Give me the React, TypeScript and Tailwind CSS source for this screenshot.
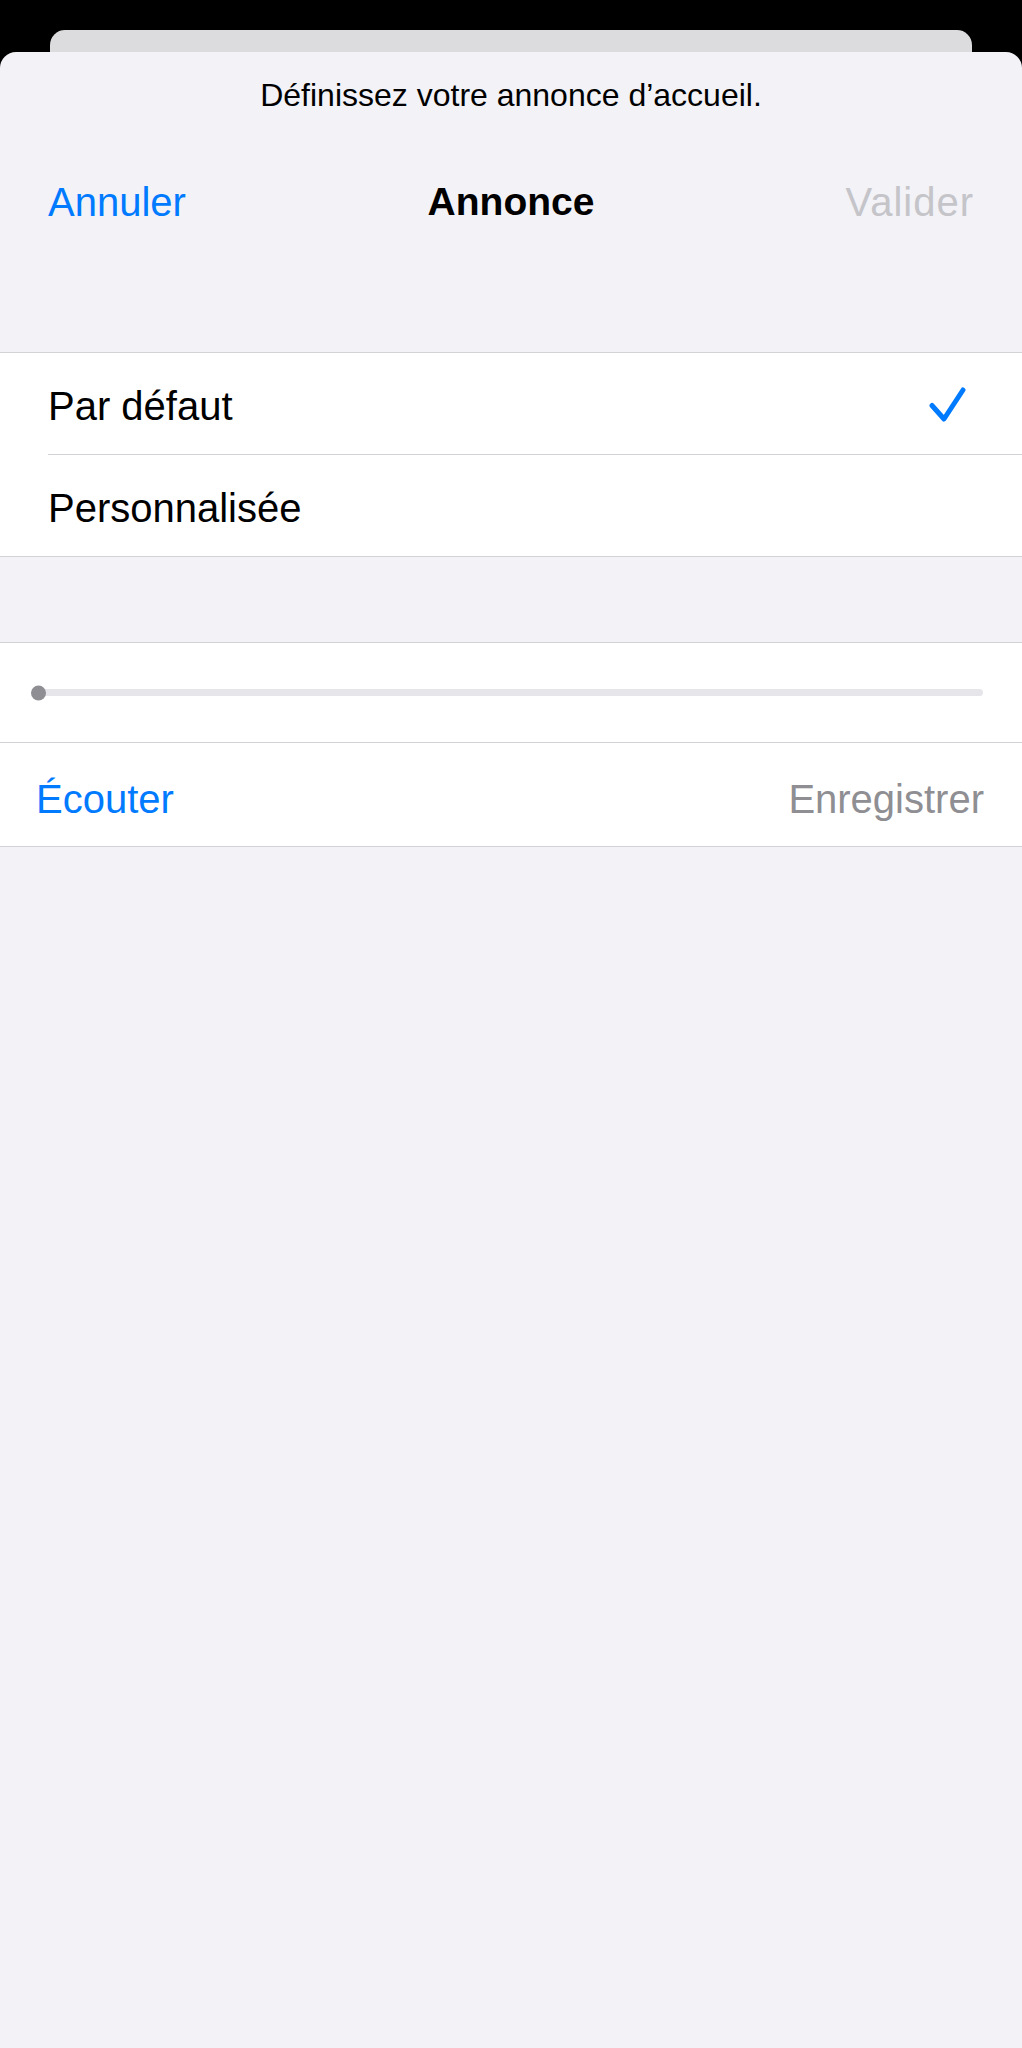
import React from "react";

const Check = () => (
  <svg width="40" height="40" viewBox="0 0 40 40" fill="none">
    <path
      d="M6 21.5 L18 35 L37 6"
      stroke="#007aff"
      strokeWidth="5"
      strokeLinecap="round"
      strokeLinejoin="round"
    />
  </svg>
);

const App = () => {
  return (
    <div className="h-[2048px] bg-black flex flex-col font-['Liberation_Sans',Arial,sans-serif] overflow-hidden">
      <div className="h-[53px] px-[50px] pt-[30px] shrink-0">
        <div className="h-[40px] bg-[#dcdcde] rounded-t-[15px]"></div>
      </div>
      <div className="flex-1 bg-[#f2f2f7] rounded-t-[16px] -mt-[1px] flex flex-col">
        <div className="h-[86px] flex items-center justify-center text-[32px] text-black">
          Définissez votre annonce d’accueil.
        </div>
        <div className="h-[128px] px-[48px] grid grid-cols-[1fr_auto_1fr] items-center text-[40px]">
          <button className="text-left text-[#007aff]">Annuler</button>
          <div className="font-bold text-black text-[39px]">Annonce</div>
          <button className="text-right text-[#c4c4c9] tracking-[1px]">Valider</button>
        </div>
        <div className="h-[86px]"></div>

        <div className="bg-white border-y border-[#d1d1d6] text-[40px] text-black">
          <div className="h-[101px] flex items-center justify-between pl-[48px] pr-[56px]">
            <span className="pt-[4px]">Par défaut</span>
            <Check />
          </div>
          <div className="ml-[48px] border-t border-[#d1d1d6]"></div>
          <div className="h-[101px] flex items-center pl-[48px]">
            <span className="pt-[4px]">Personnalisée</span>
          </div>
        </div>

        <div className="h-[85px]"></div>

        <div className="bg-white border-y border-[#d1d1d6] text-[40px]">
          <div className="h-[99px] flex items-center">
            <div className="relative flex-1 ml-[38px] mr-[39px] h-[7px] rounded-full bg-[#e5e5ea]">
              <div className="absolute -left-[7px] top-1/2 -translate-y-1/2 w-[15px] h-[15px] rounded-full bg-[#8e8e93]"></div>
            </div>
          </div>
          <div className="border-t border-[#d1d1d6]"></div>
          <div className="h-[103px] flex items-center justify-between pl-[36px] pr-[38px] pt-[8px]">
            <button className="text-[#007aff]">Écouter</button>
            <button className="text-[#8e8e93]">Enregistrer</button>
          </div>
        </div>
      </div>
    </div>
  );
};

export default App;
